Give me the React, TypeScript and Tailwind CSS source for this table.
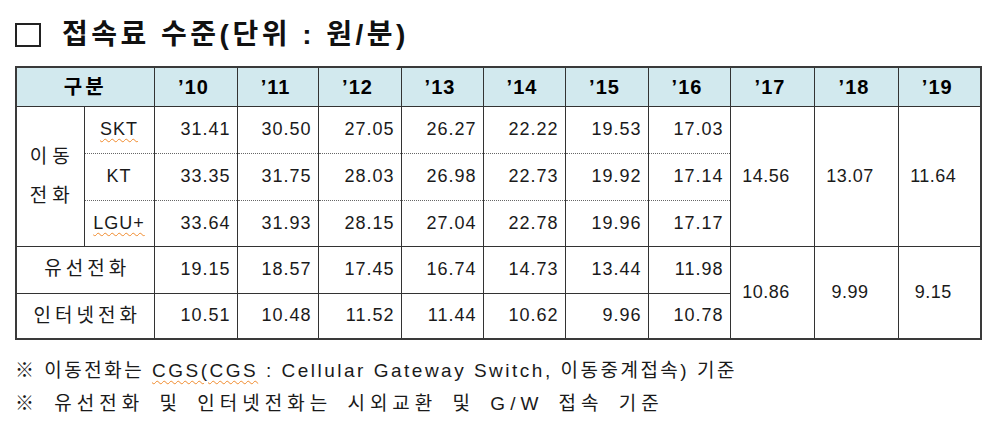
import React from "react";

const years = ["’10", "’11", "’12", "’13", "’14", "’15", "’16", "’17", "’18", "’19"];
const colWidths = [68, 70, 83, 81, 83, 82, 82, 83, 82, 84, 84, 83];

const mobile = [
  { name: "SKT", wavy: true, values: ["31.41", "30.50", "27.05", "26.27", "22.22", "19.53", "17.03"] },
  { name: "KT", wavy: false, values: ["33.35", "31.75", "28.03", "26.98", "22.73", "19.92", "17.14"] },
  { name: "LGU+", wavy: true, values: ["33.64", "31.93", "28.15", "27.04", "22.78", "19.96", "17.17"] },
];
const mobileMerged = ["14.56", "13.07", "11.64"];

const fixed = [
  { name: "유선전화", values: ["19.15", "18.57", "17.45", "16.74", "14.73", "13.44", "11.98"] },
  { name: "인터넷전화", values: ["10.51", "10.48", "11.52", "11.44", "10.62", "9.96", "10.78"] },
];
const fixedMerged = ["10.86", "9.99", "9.15"];

const wavy = "underline decoration-wavy decoration-[#f08a2c] decoration-1 underline-offset-[3px]";
const cell = "border border-[#333] p-0";
const num = "text-right pr-[6px] text-[18px] tracking-[1px] text-[#1a1a1a]";
const merged = "text-center pr-[12px] text-[18px] tracking-[0.5px] text-[#1a1a1a]";

const App = () => {
  return (
    <div className="w-[990px] h-[425px] bg-white pl-[15px] pt-[19px] text-black font-['Liberation_Sans','Noto_Sans_CJK_KR',sans-serif]">
      <h1 className="flex items-center h-[32px] text-[28px] leading-[32px] font-bold tracking-[3.5px] text-[#111]">
        <span className="w-[26px] h-[24px] border-2 border-[#222] mr-[21px]" />
        <span>접속료 수준(단위 : 원/분)</span>
      </h1>

      <table className="mt-[15px] border-collapse table-fixed border-2 border-[#3a3a3a] w-[965px]">
        <colgroup>
          {colWidths.map((w, i) => (
            <col key={i} style={{ width: w }} />
          ))}
        </colgroup>
        <thead>
          <tr className="h-[39px] bg-[#d2e9ee]">
            <th colSpan={2} className={`${cell} text-[20px] font-bold tracking-[3px] text-center`}>
              구분
            </th>
            {years.map((y) => (
              <th key={y} className={`${cell} text-[20px] font-bold tracking-[1px] text-center pr-[4px]`}>
                {y}
              </th>
            ))}
          </tr>
        </thead>
        <tbody>
          {mobile.map((r, i) => {
            const dotted = [
              i < 2 ? "border-b-[#666] [border-bottom-style:dotted]!" : "",
              i > 0 ? "border-t-[#666] [border-top-style:dotted]!" : "",
            ].join(" ");
            return (
              <tr key={r.name} className={i === 2 ? "h-[46px]" : "h-[47px]"}>
                {i === 0 && (
                  <td rowSpan={3} className={`${cell} text-center text-[19px] leading-[39px] tracking-[5px] pl-[4px] text-[#1a1a1a]`}>
                    이동
                    <br />
                    전화
                  </td>
                )}
                <td className={`${cell} ${dotted} text-center text-[18px] tracking-[1px] text-[#1a1a1a]`}>
                  <span className={r.wavy ? wavy : ""}>{r.name}</span>
                </td>
                {r.values.map((v, j) => (
                  <td key={j} className={`${cell} ${dotted} ${num}`}>
                    {v}
                  </td>
                ))}
                {i === 0 &&
                  mobileMerged.map((v) => (
                    <td key={v} rowSpan={3} className={`${cell} ${merged}`}>
                      {v}
                    </td>
                  ))}
              </tr>
            );
          })}
          {fixed.map((r, i) => (
            <tr key={r.name} className={i === 0 ? "h-[47px]" : "h-[46px]"}>
              <td colSpan={2} className={`${cell} text-center text-[19px] tracking-[4px] pl-[4px] text-[#1a1a1a]`}>
                {r.name}
              </td>
              {r.values.map((v, j) => (
                <td key={j} className={`${cell} ${num}`}>
                  {v}
                </td>
              ))}
              {i === 0 &&
                fixedMerged.map((v) => (
                  <td key={v} rowSpan={2} className={`${cell} ${merged}`}>
                    {v}
                  </td>
                ))}
            </tr>
          ))}
        </tbody>
      </table>

      <div className="mt-[14px] text-[19px] leading-[33px] text-[#1a1a1a]">
        <p className="tracking-[2.5px]">
          ※ 이동전화는 <span className={wavy}>CGS(CGS</span> : Cellular Gateway Switch, 이동중계접속) 기준
        </p>
        <p className="tracking-[5px] [word-spacing:5px]">※ 유선전화 및 인터넷전화는 시외교환 및 G/W 접속 기준</p>
      </div>
    </div>
  );
};

export default App;
